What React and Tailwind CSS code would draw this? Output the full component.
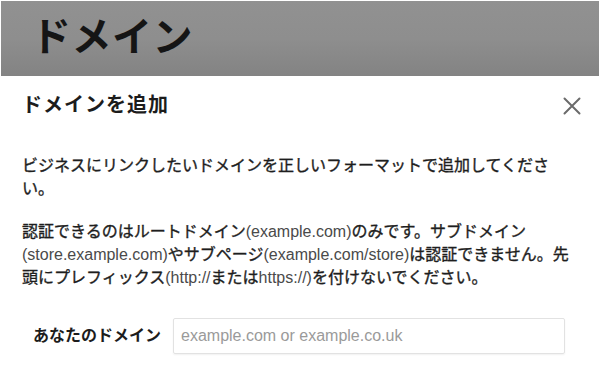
import React from 'react';

const font = { fontFamily: '"Liberation Sans", "Noto Sans CJK JP", sans-serif' };

const CloseIcon = () => (
    <svg width="18" height="18" viewBox="0 0 18 18" fill="none" xmlns="http://www.w3.org/2000/svg">
        <path d="M1.5 1.5L16.5 16.5M16.5 1.5L1.5 16.5" stroke="#6b6b6b" strokeWidth="2" strokeLinecap="round" />
    </svg>
);

// latin parts of the copy are lighter than the japanese glyphs
const En = ({ children }) => <span className="text-[#4a4a4a] [-webkit-text-stroke:0px]">{children}</span>;

const App = () => {
    return (
        <div className="w-[600px] h-[365px] bg-white overflow-hidden text-[#1c1c1c] font-['Liberation_Sans','Noto_Sans_CJK_JP',sans-serif]">
            <div className="mx-px mt-px h-[75px] bg-gradient-to-b from-[#919191] via-[#8e8e8e] to-[#838383] flex items-center px-[30px]">
                <h1 className="text-[40px] font-bold leading-none text-[#151515] tracking-[0.5px] pb-[4px]">ドメイン</h1>
            </div>

            <div className="px-[22px]">
                <div className="flex items-center justify-between pt-[15px]">
                    <h2 className="text-[20px] font-bold leading-[28px] tracking-[1px]">ドメインを追加</h2>
                    <button className="mr-[-3px] mt-[2px]">
                        <CloseIcon />
                    </button>
                </div>

                <p className="mt-[35px] text-[16px] leading-[23px] text-[#1e1e1e] [-webkit-text-stroke:0.35px_#1e1e1e]">
                    ビジネスにリンクしたいドメインを正しいフォーマットで追加してください。
                </p>

                <p className="mt-[20px] text-[16px] leading-[23px] text-[#1e1e1e] [-webkit-text-stroke:0.35px_#1e1e1e]">
                    認証できるのはルートドメイン<En>(example.com)</En>のみです。サブドメイン<En>(store.example.com)</En>やサブページ<En>(example.com/store)</En>は認証できません。先頭にプレフィックス<En>(http://</En>または<En>https://)</En>を付けないでください。
                </p>

                <div className="mt-[29px] flex items-center pl-[11px] gap-[12px]">
                    <label className="text-[16px] font-bold whitespace-nowrap">あなたのドメイン</label>
                    <input
                        type="text"
                        placeholder="example.com or example.co.uk"
                        className="w-[392px] h-[36px] border border-[#e2e2e2] rounded-[2px] shadow-[0_1px_2px_rgba(0,0,0,0.06)] px-[7px] text-[16px] placeholder:text-[#9a9a9a] outline-none"
                        style={font}
                    />
                </div>
            </div>
        </div>
    );
};

export default App;
